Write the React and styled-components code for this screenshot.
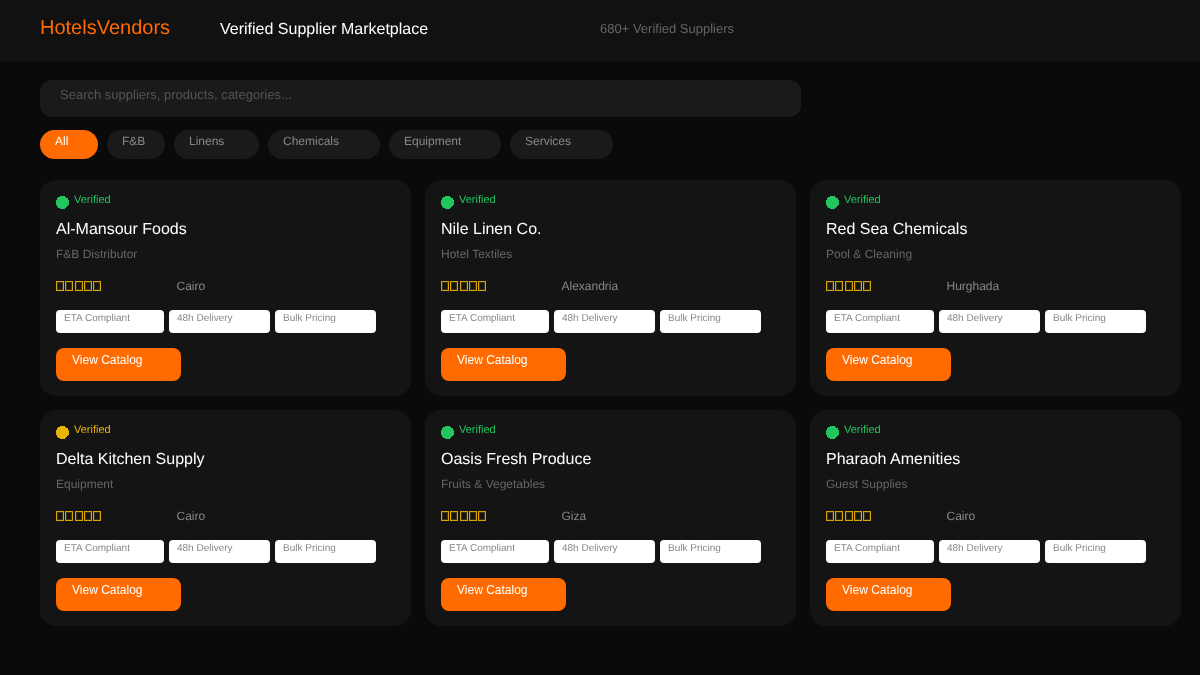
import styled, { createGlobalStyle } from 'styled-components'

const GlobalStyle = createGlobalStyle`
    html, body {
        margin: 0;
        padding: 0;
        background: #0a0a0a;
    }
    * {
        box-sizing: border-box;
    }
`

const FILTERS = [
    { label: 'All', width: 58, active: true },
    { label: 'F&B', width: 58 },
    { label: 'Linens', width: 85 },
    { label: 'Chemicals', width: 112 },
    { label: 'Equipment', width: 112 },
    { label: 'Services', width: 103 },
]

const SUPPLIERS = [
    { name: 'Al-Mansour Foods', type: 'F&B Distributor', city: 'Cairo' },
    { name: 'Nile Linen Co.', type: 'Hotel Textiles', city: 'Alexandria' },
    { name: 'Red Sea Chemicals', type: 'Pool & Cleaning', city: 'Hurghada' },
    { name: 'Delta Kitchen Supply', type: 'Equipment', city: 'Cairo', pending: true },
    { name: 'Oasis Fresh Produce', type: 'Fruits & Vegetables', city: 'Giza' },
    { name: 'Pharaoh Amenities', type: 'Guest Supplies', city: 'Cairo' },
]

const TAGS = [
    { label: 'ETA Compliant', width: 108 },
    { label: '48h Delivery', width: 101 },
    { label: 'Bulk Pricing', width: 101 },
]

const Supplier = ({ name, type, city, pending }) => (
    <Card>
        <BadgeRow>
            <Dot viewBox="0 0 13 13" shapeRendering="crispEdges">
                <circle cx="6.5" cy="6.5" r="6.5" fill={pending ? '#eab308' : '#22c55e'} />
            </Dot>
            <BadgeText $pending={pending}>Verified</BadgeText>
        </BadgeRow>
        <Name>{name}</Name>
        <Type>{type}</Type>
        <MetaRow>
            <Stars>
                {[0, 1, 2, 3, 4].map(i => <Star key={i} />)}
            </Stars>
            <City>{city}</City>
        </MetaRow>
        <Tags>
            {TAGS.map(tag => (
                <Tag key={tag.label} $width={tag.width}>{tag.label}</Tag>
            ))}
        </Tags>
        <CatalogButton>View Catalog</CatalogButton>
    </Card>
)

export default function App() {
    return (
        <Page>
            <GlobalStyle />
            <Header>
                <Logo>HotelsVendors</Logo>
                <Title>Verified Supplier Marketplace</Title>
                <Count>680+ Verified Suppliers</Count>
            </Header>
            <Main>
                <Search>Search suppliers, products, categories...</Search>
                <Filters>
                    {FILTERS.map(filter => (
                        <Filter key={filter.label} $width={filter.width} $active={filter.active}>
                            {filter.label}
                        </Filter>
                    ))}
                </Filters>
                <Grid>
                    {SUPPLIERS.map(supplier => (
                        <Supplier key={supplier.name} {...supplier} />
                    ))}
                </Grid>
            </Main>
        </Page>
    )
}

const Page = styled.div`
    width: 1200px;
    height: 675px;
    overflow: hidden;
    background: #0a0a0a;
    font-family: "Liberation Sans", Arial, sans-serif;
    text-rendering: geometricPrecision;
    will-change: transform;
`

const Header = styled.header`
    height: 61px;
    padding-left: 40px;
    display: flex;
    background: #111111;
`

const Logo = styled.div`
    width: 180px;
    padding-top: 17px;
    font-size: 20px;
    line-height: 23px;
    color: #ff6b00;
`

const Title = styled.div`
    width: 380px;
    padding-top: 21px;
    font-size: 16px;
    line-height: 18px;
    color: #ffffff;
`

const Count = styled.div`
    padding-top: 21px;
    font-size: 13px;
    line-height: 16px;
    color: #666666;
`

const Main = styled.main`
    padding: 19px 0 0 40px;
`

const Search = styled.div`
    width: 761px;
    height: 37px;
    padding: 7px 20px 0;
    border-radius: 12px;
    background: #1a1a1a;
    font-size: 13px;
    line-height: 16px;
    color: #555555;
`

const Filters = styled.div`
    display: flex;
    gap: 9px;
    margin-top: 13px;
`

const Filter = styled.div`
    width: ${props => props.$width}px;
    height: 29px;
    padding: 4px 15px 0;
    border-radius: 15px;
    background: ${props => props.$active ? '#ff6b00' : '#1a1a1a'};
    font-size: 12px;
    line-height: 14px;
    color: ${props => props.$active ? '#ffffff' : '#888888'};
`

const Grid = styled.div`
    display: grid;
    grid-template-columns: repeat(3, 371px);
    grid-auto-rows: 216px;
    gap: 14px;
    margin-top: 21px;
`

const Card = styled.article`
    padding: 13px 16px 0;
    border-radius: 16px;
    background: #141414;
`

const BadgeRow = styled.div`
    display: flex;
    height: 16px;
    gap: 5px;
`

const Dot = styled.svg`
    width: 13px;
    height: 13px;
    margin-top: 3px;
`

const BadgeText = styled.span`
    font-size: 11px;
    line-height: 15px;
    color: ${props => props.$pending ? '#eab308' : '#22c55e'};
`

const Name = styled.div`
    margin-top: 12px;
    font-size: 16px;
    line-height: 18px;
    color: #ffffff;
`

const Type = styled.div`
    margin-top: 8px;
    font-size: 12px;
    line-height: 14px;
    color: #666666;
`

const MetaRow = styled.div`
    display: flex;
    margin-top: 18px;
`

const Stars = styled.div`
    display: flex;
    gap: 1.25px;
    width: 120.5px;
    padding-top: 2px;
`

const Star = styled.span`
    width: 8px;
    height: 10px;
    border: 1px solid #d9a406;
    box-shadow: inset 0 0 0 1px rgba(234, 179, 8, 0.2);
`

const City = styled.div`
    font-size: 12px;
    line-height: 14px;
    color: #888888;
`

const Tags = styled.div`
    display: flex;
    gap: 5px;
    margin-top: 17px;
`

const Tag = styled.span`
    width: ${props => props.$width}px;
    height: 23px;
    padding: 3px 8px 0;
    border-radius: 4px;
    background: #ffffff;
    font-size: 10px;
    line-height: 12px;
    color: #888888;
`

const CatalogButton = styled.button`
    display: block;
    width: 125px;
    height: 33px;
    margin-top: 15px;
    padding: 5px 16px 14px;
    border: none;
    border-radius: 8px;
    background: #ff6b00;
    font-family: inherit;
    font-size: 12px;
    line-height: 14px;
    text-align: left;
    color: #ffffff;
`
